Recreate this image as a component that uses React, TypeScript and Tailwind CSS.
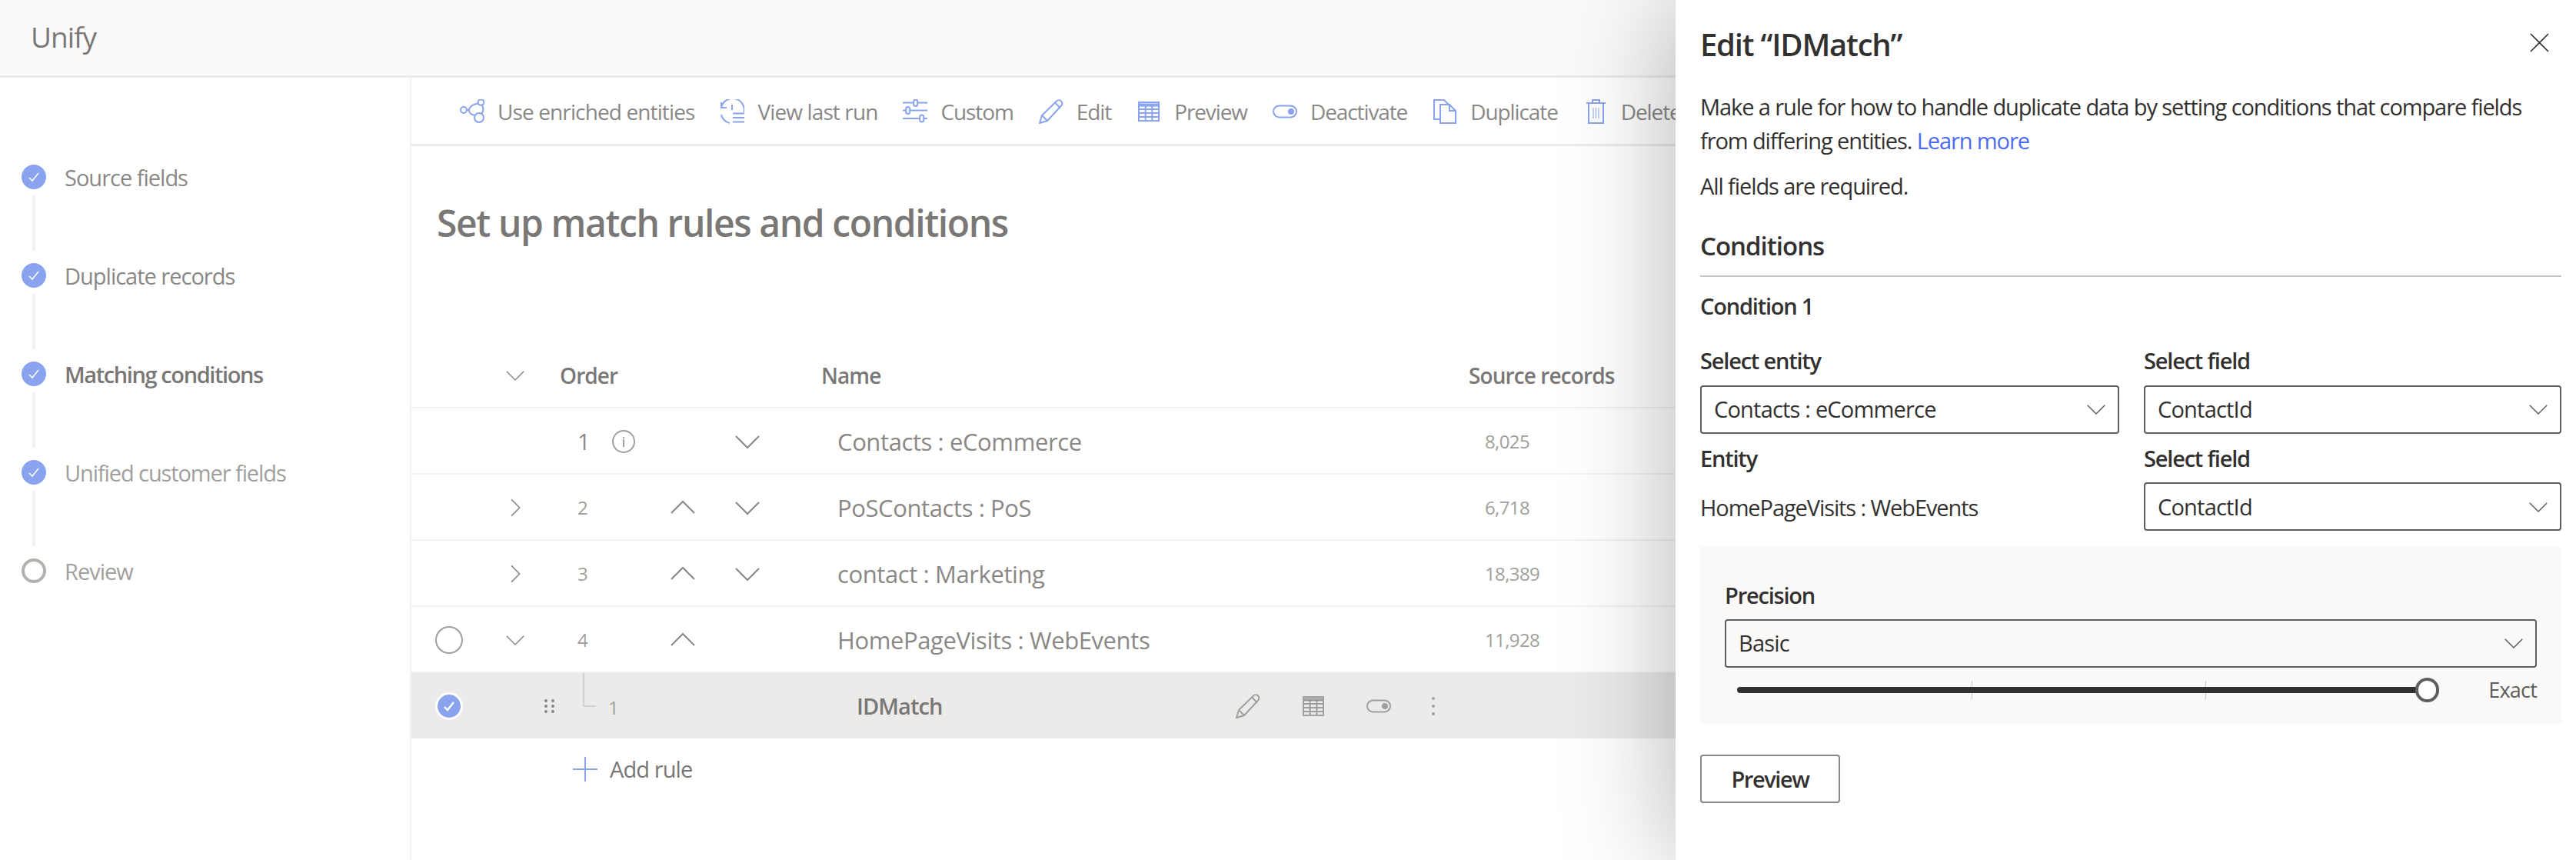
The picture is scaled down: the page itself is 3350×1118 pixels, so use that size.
import type { ReactNode } from 'react';

const FONT = 'font-["Open_Sans",sans-serif]';

// Toolbar and row icons share this wrapper
function Icon({ size = 32, className = '', children }: { size?: number; className?: string; children: ReactNode }) {
    return (
        <svg width={size} height={size} viewBox="0 0 32 32" fill="none" stroke="currentColor" strokeWidth="2" className={`shrink-0 ${className}`}>
            {children}
        </svg>
    );
}

const EnrichedIcon = () => (
    <Icon>
        <circle cx="5" cy="14" r="4" />
        <circle cx="27.5" cy="4" r="3.8" />
        <circle cx="25" cy="24" r="6" />
        <path d="M9 14h3M24 5.5C17 6 12 10 12 15c0 3 3 5 8 6M29 8c2 4 2 8-1 11" />
    </Icon>
);
const HistoryIcon = () => (
    <Icon>
        <path d="M2 4v7h7M2 11A15 15 0 0 1 31.5 17M2 20A15 15 0 0 0 13 31" />
        <path d="M16 7v7M17 18.5h15M17 24h15M17 29.5h15" />
    </Icon>
);
const SlidersIcon = () => (
    <Icon>
        <path d="M0 4.5h14M19.500 4.500H32M0 14.500h4M9.500 14.500H32M0 25h22M27.500 25H32" />
        <rect x="14.200" y="0.500" width="5" height="8.500" rx="2.500" />
        <rect x="4.200" y="10" width="5" height="9" rx="2.500" />
        <rect x="22.200" y="20.500" width="5" height="9" rx="2.500" />
    </Icon>
);
const PencilIcon = () => (
    <Icon>
        <path d="M1 31l3-10L23 2.500c2-2 4.500-1.500 6 0s2 4 0 6L11 28zM4 21l7 7M21 4.500l7 7" />
    </Icon>
);
const TableIcon = () => (
    <Icon>
        <path d="M3 4h26v24H3zM3 6.500h26M3 8.500h26M3 13h26M3 18h26M3 23h26M11.700 8v20M20.300 8v20" />
    </Icon>
);
const ToggleIcon = () => (
    <Icon>
        <rect x="1" y="8.500" width="30" height="15" rx="7.500" />
        <circle cx="24" cy="16" r="4" fill="currentColor" stroke="none" />
    </Icon>
);
const CopyIcon = () => (
    <Icon>
        <path d="M10 26H2V1h13l6 6" />
        <path d="M10 7h12l8 8v16H10zM22 7v8h8" />
    </Icon>
);
const TrashIcon = () => (
    <Icon>
        <path d="M4 5h25M12 5V1h9v4M7 5v26h19V5" />
        <path d="M13 11v14M16.500 11v14M20 11v14" strokeWidth="1" />
    </Icon>
);
const Chevron = ({ dir, size = 24, className = '' }: { dir: 'up' | 'down' | 'right'; size?: number; className?: string }) => {
    const d = { up: 'M1 23L16 8l15 15', down: 'M1 9l15 15L31 9', right: 'M10 3l13 13-13 13' }[dir];
    return (
        <Icon size={size} className={className}>
            <path d={d} />
        </Icon>
    );
};
const CheckMark = ({ weight = 1.6 }: { weight?: number }) => (
    <svg width="16" height="16" viewBox="0 0 16 16" fill="none" stroke="white" strokeWidth={weight}>
        <path d="M2 9l4 4 8-10" />
    </svg>
);

const STEPS = [
    { label: 'Source fields', done: true, cls: 'text-[#8a8886] tracking-[-1px]' },
    { label: 'Duplicate records', done: true, cls: 'text-[#8a8886] tracking-[-1px]' },
    { label: 'Matching conditions', done: true, cls: 'text-[#797775] font-semibold tracking-[-1.4px]' },
    { label: 'Unified customer fields', done: true, cls: 'text-[#a19f9d] tracking-[-1.1px]' },
    { label: 'Review', done: false, cls: 'text-[#a19f9d] tracking-[-1px]' },
];

const TOOLBAR = [
    { label: 'Use enriched entities', icon: <EnrichedIcon />, cls: 'tracking-[-0.88px]' },
    { label: 'View last run', icon: <HistoryIcon />, cls: 'tracking-[-0.88px]' },
    { label: 'Custom', icon: <SlidersIcon />, cls: 'tracking-[-1.1px]' },
    { label: 'Edit', icon: <PencilIcon />, cls: 'tracking-[-1.1px]' },
    { label: 'Preview', icon: <TableIcon />, cls: 'tracking-[-1.1px]' },
    { label: 'Deactivate', icon: <ToggleIcon />, cls: 'tracking-[-1.1px]' },
    { label: 'Duplicate', icon: <CopyIcon />, cls: 'tracking-[-1.1px]' },
    { label: 'Delete', icon: <TrashIcon />, cls: 'tracking-[-1.1px]' },
];

const ROWS = [
    { order: '1', name: 'Contacts : eCommerce', count: '8,025', info: true, down: true },
    { order: '2', name: 'PoSContacts : PoS', count: '6,718', expand: 'right', up: true, down: true },
    { order: '3', name: 'contact : Marketing', count: '18,389', expand: 'right', up: true, down: true },
    { order: '4', name: 'HomePageVisits : WebEvents', count: '11,928', expand: 'down', up: true, radio: true },
];

const GRID = 'grid grid-cols-[98px_74px_83px_42px_112px_56px_910px_300px] items-center';

function Sidebar() {
    return (
        <aside className="w-[535px] shrink-0 border-r-2 border-[#f3f2f1] pl-[28px] pt-[106px]">
            {STEPS.map((step, i) => (
                <div key={step.label} className="h-[128px]">
                    <div className="flex items-center gap-[24px]">
                        {step.done ? (
                            <span className="flex h-[32px] w-[32px] items-center justify-center rounded-full bg-[#8aa3ee]">
                                <CheckMark />
                            </span>
                        ) : (
                            <span className="h-[32px] w-[32px] rounded-full border-[4px] border-[#b3b0ad]" />
                        )}
                        <span className={`pt-[2px] text-[29px] ${step.cls}`}>{step.label}</span>
                    </div>
                    {i < STEPS.length - 1 && <div className="ml-[14px] mt-[1px] h-[72px] w-[4px] bg-[#f3f2f1]" />}
                </div>
            ))}
        </aside>
    );
}

function TableRow({ row }: { row: (typeof ROWS)[number] }) {
    return (
        <div className={`${GRID} h-[86px] border-b-2 border-[#f3f2f1] pt-[2px] text-[#8a8886]`}>
            <div className="flex justify-center">
                {row.radio && <span className="h-[36px] w-[36px] rounded-full border-2 border-[#a19f9d]" />}
            </div>
            <div className="flex justify-center">
                {row.expand === 'right' && <Chevron dir="right" size={26} />}
                {row.expand === 'down' && <Chevron dir="down" size={24} />}
            </div>
            <div className={`pl-[44px] tracking-[-0.5px] ${row.info ? 'text-[29px]' : 'text-[24px] text-[#a19f9d]'}`}>{row.order}</div>
            <div className="flex justify-center">
                {row.info && (
                    <span className="flex h-[30px] w-[30px] items-center justify-center rounded-full border-2 border-[#a19f9d] text-[19px] leading-none">i</span>
                )}
            </div>
            <div className="flex justify-center">{row.up && <Chevron dir="up" size={32} />}</div>
            <div className="flex justify-center">{row.down && <Chevron dir="down" size={32} />}</div>
            <div className="pl-[89px] text-[31px] tracking-[-0.4px]">{row.name}</div>
            <div className="pl-[21px] text-[24px] tracking-[-0.6px] text-[#a19f9d]">{row.count}</div>
        </div>
    );
}

function SelectBox({ value }: { value: string }) {
    return (
        <div className="flex h-[63px] items-center justify-between rounded-[4px] border-2 border-[#605e5c] pl-[16px] pr-[16px] text-[#323130]">
            <span className="text-[29px] tracking-[-0.8px]">{value}</span>
            <Chevron dir="down" size={24} className="text-[#605e5c]" />
        </div>
    );
}

function FieldLabel({ children }: { children: ReactNode }) {
    return <div className="text-[29px] font-semibold tracking-[-1.2px] text-[#323130]">{children}</div>;
}

function EditPanel() {
    return (
        <div className="absolute bottom-0 right-0 top-0 w-[1171px] bg-white pl-[32px] pr-[19px] shadow-[-8px_0_130px_rgba(0,0,0,0.28)]">
            <div className="flex h-[116px] items-center justify-between">
                <h2 className="text-[40px] font-semibold tracking-[-1.2px] text-[#323130]">Edit “IDMatch”</h2>
                <svg width="25" height="25" viewBox="0 0 25 25" fill="none" stroke="#323130" strokeWidth="1.6" className="mb-[5px] mr-[16px]">
                    <path d="M1 1l23 23M24 1L1 24" />
                </svg>
            </div>
            <p className="mt-[1px] text-[29px] leading-[44px] tracking-[-1.1px] text-[#323130]">
                Make a rule for how to handle duplicate data by setting conditions that compare fields from differing entities.{' '}
                <span className="text-[#4f6bed]">Learn more</span>
            </p>
            <p className="mt-[14px] text-[29px] leading-[45px] tracking-[-1.1px] text-[#323130]">All fields are required.</p>
            <h3 className="mt-[33px] border-b-2 border-[#c8c6c4] pb-[16px] text-[33px] font-semibold leading-[45px] tracking-[-1px] text-[#323130]">Conditions</h3>
            <div className="mt-[20px] text-[29px] font-semibold leading-[36px] tracking-[-1.2px] text-[#323130]">Condition 1</div>

            <div className="mt-[31px] grid grid-cols-[545px_543px] gap-x-[32px]">
                <div>
                    <FieldLabel>Select entity</FieldLabel>
                    <div className="mt-[10px]">
                        <SelectBox value="Contacts : eCommerce" />
                    </div>
                </div>
                <div>
                    <FieldLabel>Select field</FieldLabel>
                    <div className="mt-[10px]">
                        <SelectBox value="ContactId" />
                    </div>
                </div>
                <div className="mt-[10px]">
                    <FieldLabel>Entity</FieldLabel>
                    <div className="mt-[21px] text-[29px] tracking-[-1.1px] text-[#323130]">HomePageVisits : WebEvents</div>
                </div>
                <div className="mt-[10px]">
                    <FieldLabel>Select field</FieldLabel>
                    <div className="mt-[10px]">
                        <SelectBox value="ContactId" />
                    </div>
                </div>
            </div>

            <div className="mt-[20px] h-[231px] w-[1120px] bg-[#faf9f8] px-[32px] pt-[42px]">
                <FieldLabel>Precision</FieldLabel>
                <div className="mt-[9px]">
                    <SelectBox value="Basic" />
                </div>
                <div className="mt-[9px] flex items-center">
                    <div className="relative ml-[16px] h-[8px] w-[898px]">
                        <span className="absolute left-[305px] top-[-8px] h-[24px] w-px bg-[#c8c6c4]" />
                        <span className="absolute left-[609px] top-[-8px] h-[24px] w-px bg-[#c8c6c4]" />
                        <span className="absolute inset-0 rounded-full bg-[#323130]" />
                        <span className="absolute right-[-15px] top-[-12px] h-[32px] w-[31px] rounded-full border-[4px] border-[#605e5c] bg-white" />
                    </div>
                    <span className="ml-auto text-[27px] tracking-[-0.8px] text-[#605e5c]">Exact</span>
                </div>
            </div>

            <button className="mt-[40px] flex h-[63px] w-[182px] items-center justify-center rounded-[4px] border-2 border-[#8a8886] bg-white text-[29px] font-semibold tracking-[-1.4px] text-[#323130]">
                Preview
            </button>
        </div>
    );
}

export default function App() {
    return (
        <div className={`relative flex h-[1118px] w-[3350px] flex-col overflow-hidden bg-white ${FONT}`}>
            <header className="flex h-[101px] shrink-0 items-center border-b-[3px] border-[#edebe9] bg-[#fafafa] pb-[3px] pl-[40px] text-[37px] tracking-[-1px] text-[#7a7876]">
                Unify
            </header>
            <div className="flex min-h-0 flex-1">
                <Sidebar />
                <main className="min-w-0 flex-1">
                    <div className="flex h-[89px] items-center gap-[33px] border-b-[3px] border-[#edebe9] pl-[63px] pt-[2px]">
                        {TOOLBAR.map((item) => (
                            <div key={item.label} className={`flex items-center gap-[17px] whitespace-nowrap text-[28px] text-[#8a8886] ${item.cls}`}>
                                <span className="text-[#8aa3ee]">{item.icon}</span>
                                {item.label}
                            </div>
                        ))}
                    </div>
                    <h1 className="h-[240px] pl-[33px] pt-[64px] text-[48px] font-semibold tracking-[-1.4px] text-[#7a7876]">Set up match rules and conditions</h1>
                    <div className={`${GRID} h-[101px] border-b-2 border-[#f3f2f1] pt-[16px] text-[28px] font-semibold tracking-[-0.9px] text-[#7a7876]`}>
                        <div />
                        <div className="flex justify-center text-[#8a8886]">
                            <Chevron dir="down" size={24} />
                        </div>
                        <div className="col-span-4 pl-[21px]">Order</div>
                        <div className="pl-[68px]">Name</div>
                        <div>Source records</div>
                    </div>
                    {ROWS.map((row) => (
                        <TableRow key={row.order} row={row} />
                    ))}
                    <div className="flex h-[85px] items-center bg-[#edebe9] text-[#797775]">
                        <div className="flex w-[98px] justify-center">
                            <span className="flex h-[36px] w-[36px] items-center justify-center rounded-full border-[3px] border-white bg-[#8aa3ee]">
                                <CheckMark weight={2.4} />
                            </span>
                        </div>
                        <div className="ml-[75px] grid grid-cols-2 gap-x-[5px] gap-y-[3px]">
                            {[0, 1, 2, 3, 4, 5].map((dot) => (
                                <span key={dot} className="h-[4px] w-[4px] rounded-full bg-[#8a8886]" />
                            ))}
                        </div>
                        <div className="relative ml-[37px] w-[33px] self-stretch">
                            <span className="absolute left-0 top-0 h-[44px] w-[17px] border-b-2 border-l-2 border-[#d2d0ce]" />
                            <span className="absolute left-[33px] top-[27px] text-[24px] text-[#a19f9d]">1</span>
                        </div>
                        <div className="ml-[323px] w-[493px] text-[29px] font-semibold tracking-[-0.9px]">IDMatch</div>
                        <div className="flex items-center gap-[53px] text-[#a19f9d]">
                            <PencilIcon />
                            <TableIcon />
                            <ToggleIcon />
                            <span className="flex flex-col gap-[6px]">
                                <i className="h-[4px] w-[4px] rounded-full bg-[#a19f9d]" />
                                <i className="h-[4px] w-[4px] rounded-full bg-[#a19f9d]" />
                                <i className="h-[4px] w-[4px] rounded-full bg-[#a19f9d]" />
                            </span>
                        </div>
                    </div>
                    <div className="mt-[18px] flex items-center gap-[16px] pl-[210px] text-[29px] tracking-[-0.9px] text-[#797775]">
                        <svg width="32" height="32" viewBox="0 0 32 32" stroke="#8aa3ee" strokeWidth="2">
                            <path d="M16 0v32M0 16h32" />
                        </svg>
                        Add rule
                    </div>
                </main>
            </div>
            <EditPanel />
        </div>
    );
}
